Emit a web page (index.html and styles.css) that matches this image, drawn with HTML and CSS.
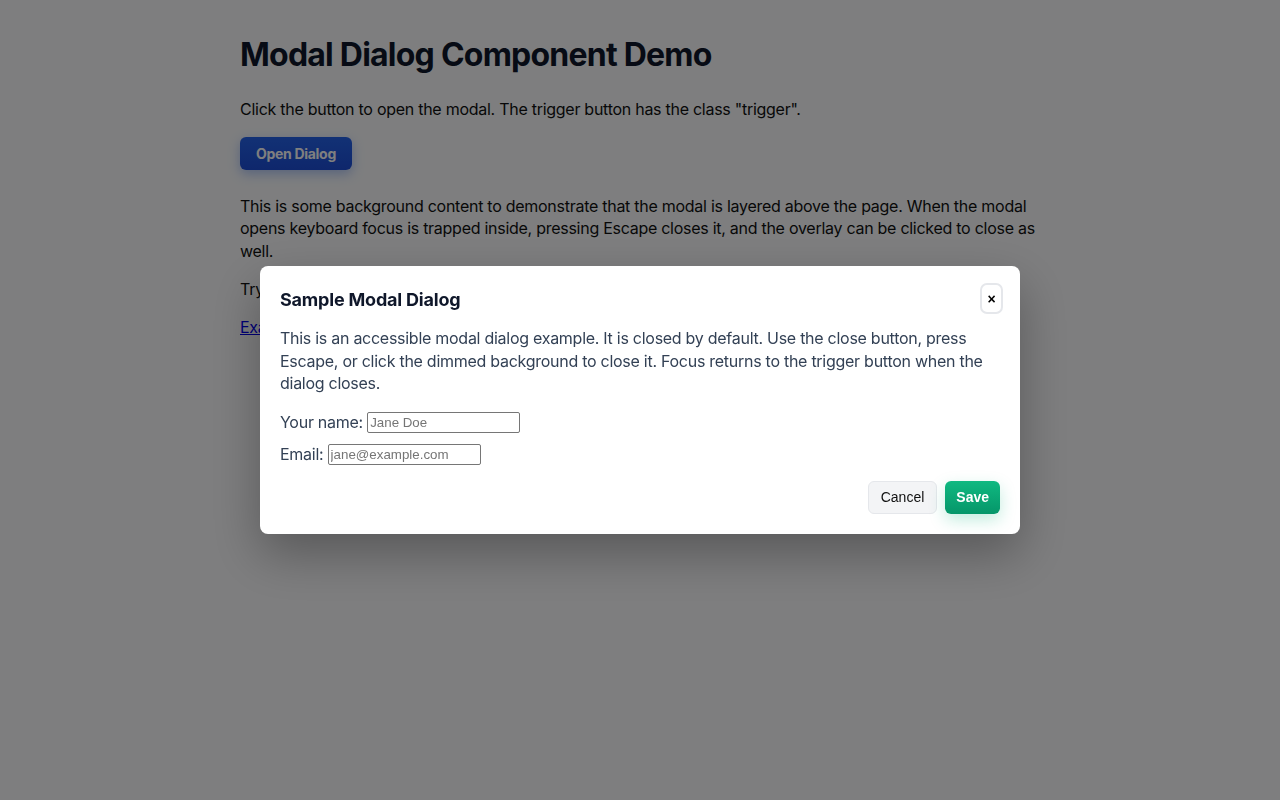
FILE: index.html
```html
<!DOCTYPE html>
<html lang="en">
<head>
<meta charset="utf-8">
<title>Modal Dialog Component Demo</title>
<link rel="stylesheet" href="styles.css">
</head>
<body>
<main class="page">
  <h1 class="title">Modal Dialog Component Demo</h1>
  <p class="text">Click the button to open the modal. The trigger button has the class "trigger".</p>
  <button class="trigger" type="button">Open Dialog</button>
  <p class="text">This is some background content to demonstrate that the modal is layered above the page. When the modal opens keyboard focus is trapped inside, pressing Escape closes it, and the overlay can be clicked to close as well.</p>
  <p class="text">Try tabbing through the page while the dialog is open to confirm focus stays inside.</p>
  <p class="text"><a href="#" class="link">Example link behind the modal</a></p>
</main>

<div class="overlay">
  <div class="modal" role="dialog" aria-modal="true" aria-labelledby="modal-title">
    <div class="modal-head">
      <h2 class="modal-title" id="modal-title">Sample Modal Dialog</h2>
      <button class="close" type="button" aria-label="Close">×</button>
    </div>
    <p class="modal-text">This is an accessible modal dialog example. It is closed by default. Use the close button, press Escape, or click the dimmed background to close it. Focus returns to the trigger button when the dialog closes.</p>
    <div class="field"><label>Your name: <input type="text" placeholder="Jane Doe"></label></div>
    <div class="field"><label>Email: <input type="email" placeholder="jane@example.com"></label></div>
    <div class="actions">
      <button class="btn-cancel" type="button">Cancel</button>
      <button class="btn-save" type="button">Save</button>
    </div>
  </div>
</div>
</body>
</html>
```
FILE: styles.css
```css
html, body {
  margin: 0;
  padding: 0;
}
body {
  background: #fcfdff;
  color: #111;
  font-family: Inter, "Noto Sans", sans-serif;
  font-size: 16px;
  line-height: 1.4;
  letter-spacing: -0.27px;
}
.page {
  max-width: 800px;
  margin: 0 auto;
  padding: 36px 0 0;
}
.title {
  font-size: 32px;
  font-weight: 700;
  line-height: 1.2;
  margin: 0 0 24px;
  color: #0f172a;
  letter-spacing: -0.77px;
}
.text {
  margin: 0 0 16px;
}
.trigger {
  font-family: Inter, "Noto Sans", sans-serif;
  font-size: 14px;
  font-weight: 700;
  letter-spacing: -0.3px;
  color: #fff;
  background: linear-gradient(180deg, #2563eb, #1d4ed8);
  border: none;
  border-radius: 6px;
  padding: 0 16px;
  height: 33px;
  margin: 0 0 25px;
  box-shadow: 0 4px 12px rgba(37, 99, 235, 0.35);
  cursor: pointer;
}
.link {
  color: #0000ee;
}
.overlay {
  position: fixed;
  inset: 0;
  background: rgba(0, 0, 0, 0.5);
  display: flex;
  align-items: center;
  justify-content: center;
}
.modal {
  width: 760px;
  box-sizing: border-box;
  background: #fff;
  border-radius: 8px;
  padding: 19px 20px 20px;
  box-shadow: 0 20px 50px rgba(0, 0, 0, 0.3);
}
.modal-head {
  display: flex;
  justify-content: space-between;
  align-items: center;
  margin-bottom: 13px;
}
.modal-title {
  margin: 0;
  font-size: 18px;
  font-weight: 700;
  color: #0f172a;
  line-height: 1.4;
  letter-spacing: -0.2px;
}
.close {
  width: 23px;
  height: 31px;
  margin: -2px -3px 0 0;
  padding: 0;
  border: 2.5px solid #e5e7eb;
  border-radius: 7px;
  background: #fff;
  color: #000;
  font-family: "Liberation Sans", Arial, sans-serif;
  font-size: 14px;
  font-weight: 700;
  line-height: 1;
  cursor: pointer;
}
.modal-text {
  margin: 0 0 16px;
  color: #334155;
  line-height: 1.42;
}
.field {
  color: #334155;
  margin-bottom: 9px;
}
.field input {
  font-family: "Liberation Sans", Arial, sans-serif;
  font-size: 13.33px;
  width: 153px;
  height: 21px;
  box-sizing: border-box;
  border: 1px solid #767676;
  border-radius: 2px;
  padding: 1px 2px;
  vertical-align: 1px;
  letter-spacing: 0;
}
.field input::placeholder {
  color: #757575;
}
.actions {
  display: flex;
  justify-content: flex-end;
  gap: 8px;
  margin-top: 16px;
}
.btn-cancel, .btn-save {
  font-family: "Liberation Sans", Arial, sans-serif;
  font-size: 14px;
  height: 33px;
  border-radius: 6px;
  letter-spacing: 0;
  cursor: pointer;
}
.btn-cancel {
  background: #f3f4f6;
  border: 1px solid #e5e7eb;
  color: #111;
  padding: 0 12px;
}
.btn-save {
  background: linear-gradient(180deg, #10b981, #059669);
  border: none;
  color: #fff;
  font-weight: 700;
  padding: 0 11px;
  box-shadow: 0 6px 16px rgba(16, 185, 129, 0.25);
}
```
